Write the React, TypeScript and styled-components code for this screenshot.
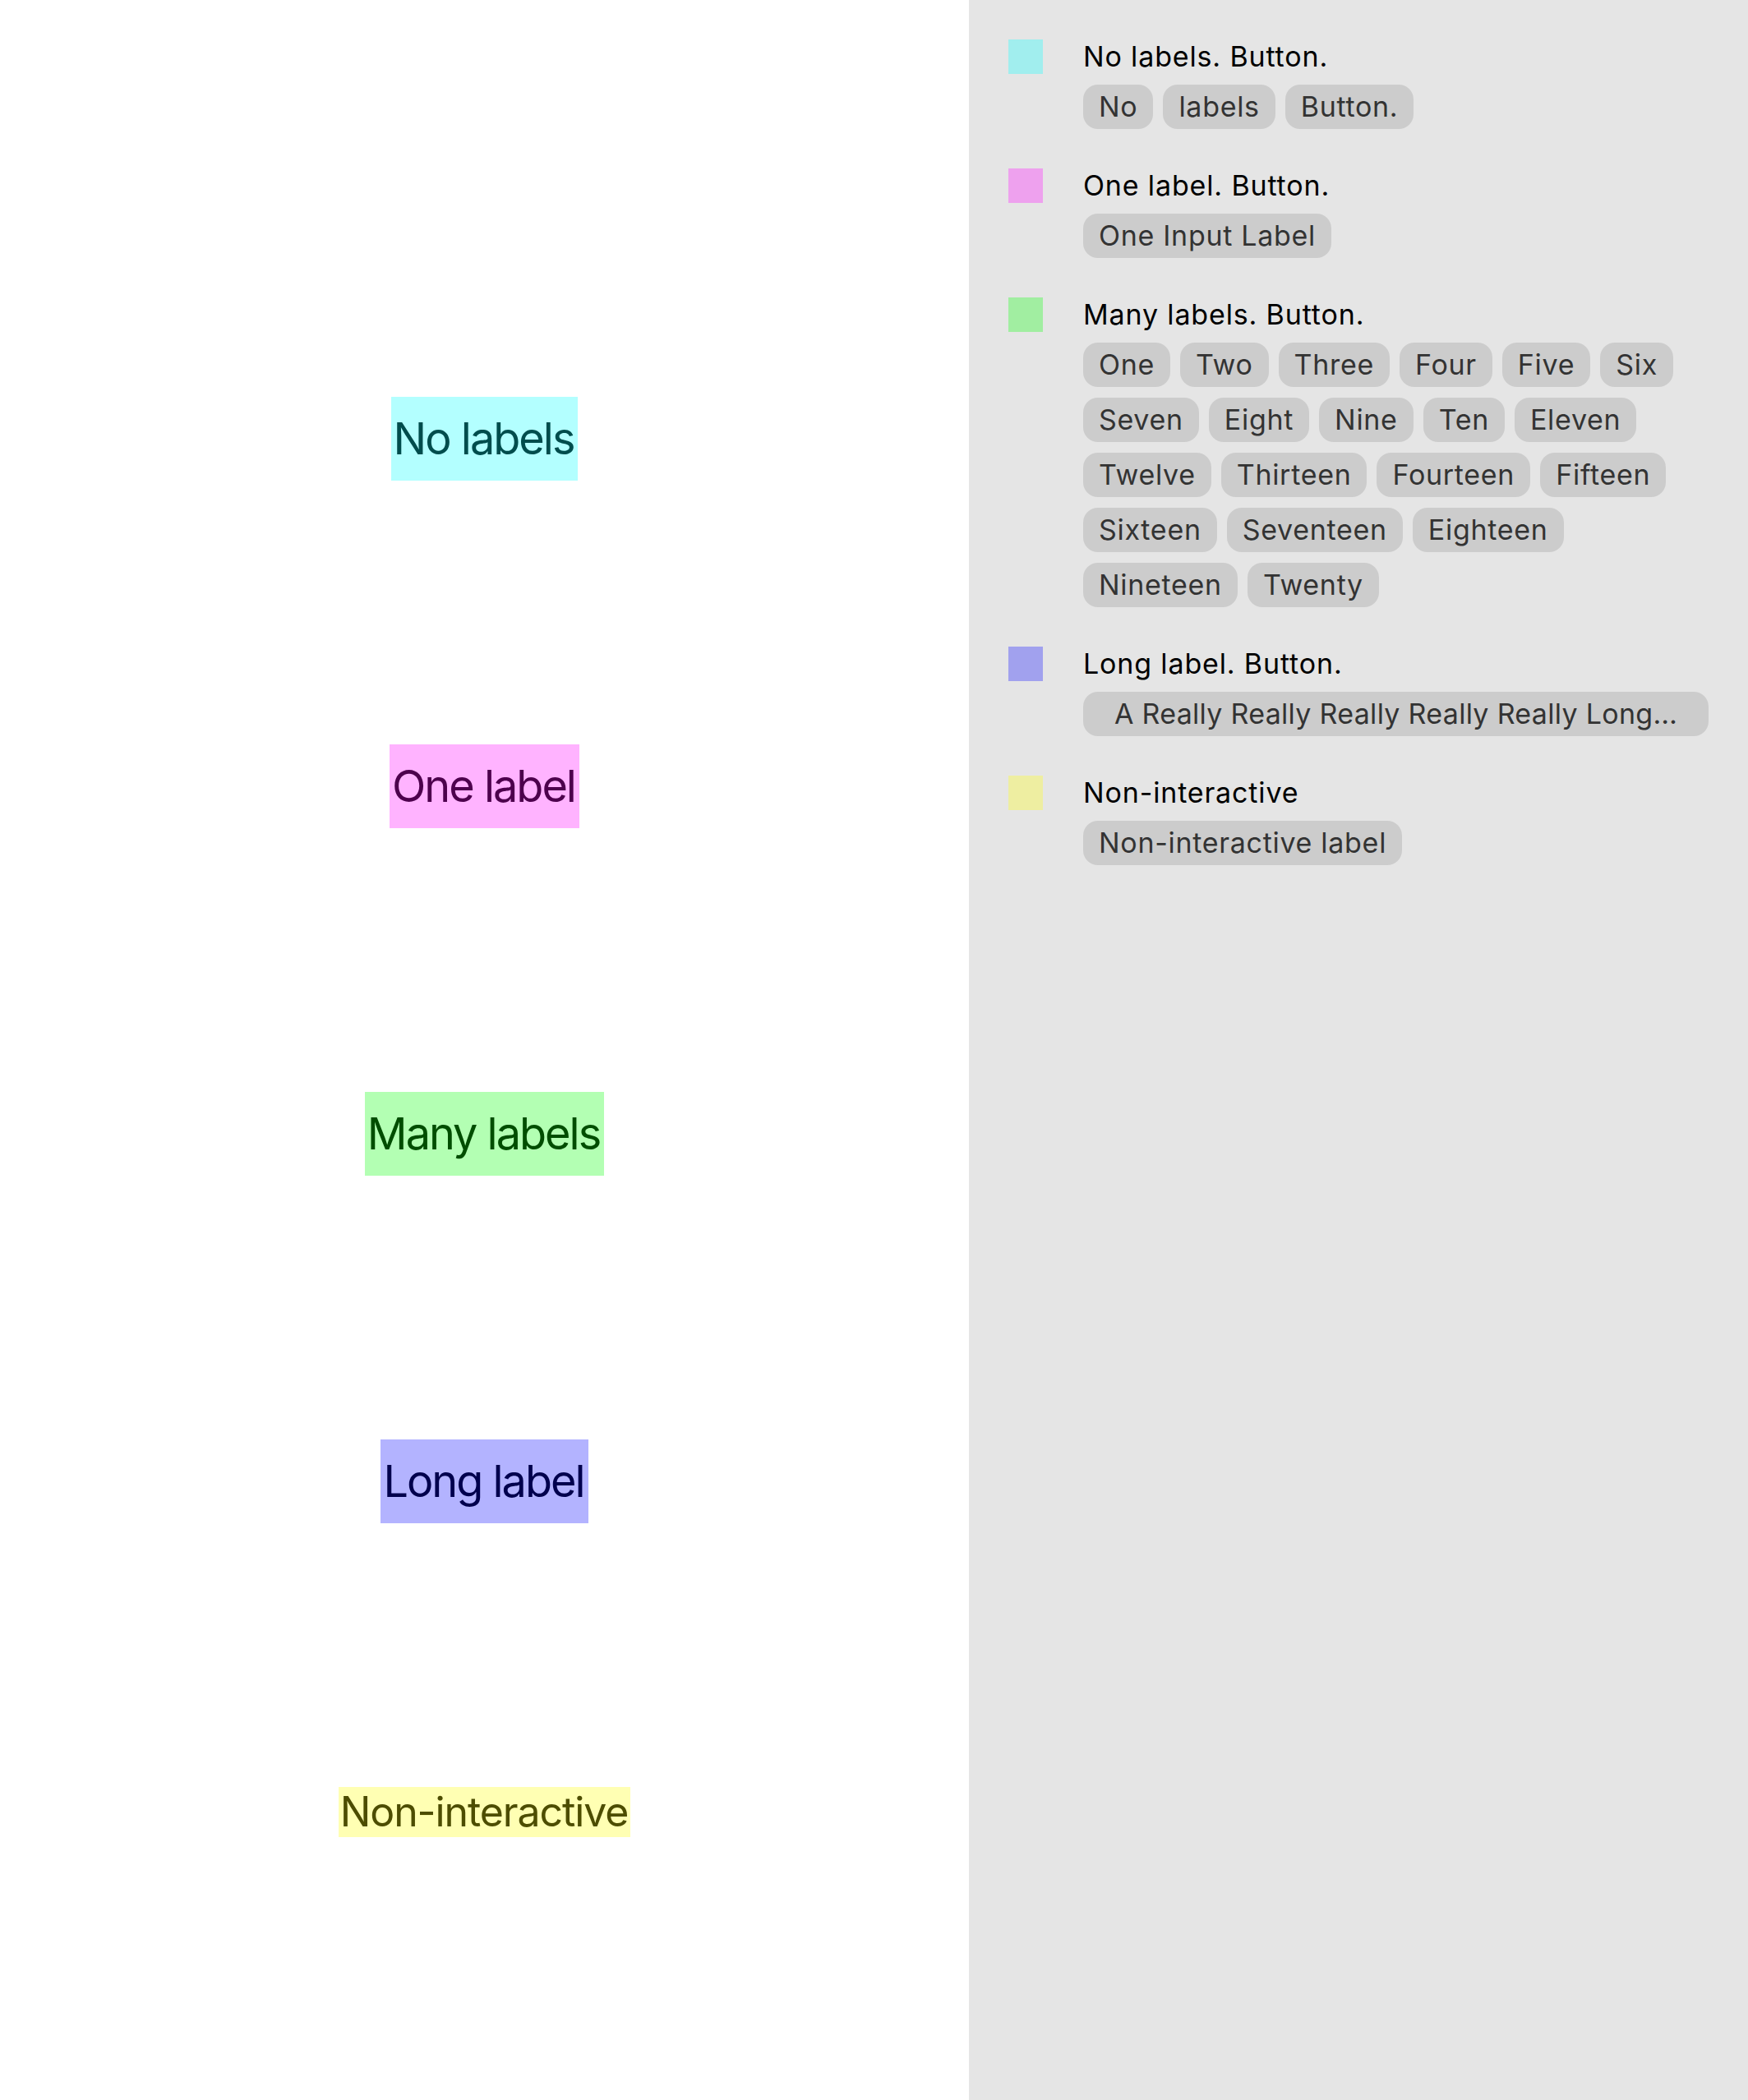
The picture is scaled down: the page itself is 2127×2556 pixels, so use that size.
import React from "react";
import styled, { createGlobalStyle } from "styled-components";

const GlobalStyle = createGlobalStyle`
  html, body {
    margin: 0;
    padding: 0;
    background: #ffffff;
  }
  body {
    font-family: Inter, "Noto Sans", "Liberation Sans", sans-serif;
    -webkit-font-smoothing: antialiased;
  }
`;

type Tone = "cyan" | "magenta" | "green" | "blue" | "yellow";

const toneBg: Record<Tone, string> = {
  cyan: "#b3ffff",
  magenta: "#ffb3ff",
  green: "#b3ffb3",
  blue: "#b3b3ff",
  yellow: "#ffffb3",
};

const toneInk: Record<Tone, string> = {
  cyan: "#004d4d",
  magenta: "#4d004d",
  green: "#004d00",
  blue: "#00004d",
  yellow: "#4d4d00",
};

const toneSwatch: Record<Tone, string> = {
  cyan: "#a1eeee",
  magenta: "#eea1ee",
  green: "#a1eea1",
  blue: "#a1a1ee",
  yellow: "#eeeea1",
};

const Page = styled.div`
  display: grid;
  grid-template-columns: 1179px 1fr;
  min-height: 2556px;
`;

const Stage = styled.main`
  display: flex;
  flex-direction: column;
  align-items: center;
  gap: 321px;
  padding-top: 483px;
  background: #ffffff;
`;

const DemoButton = styled.button<{ $tone: Tone }>`
  border: none;
  margin: 0;
  font-family: inherit;
  font-size: 54px;
  line-height: 66px;
  letter-spacing: -2px;
  padding: 18px 5px 18px 3px;
  background: ${(p) => toneBg[p.$tone]};
  color: ${(p) => toneInk[p.$tone]};
  cursor: pointer;
`;

const DemoText = styled.span<{ $tone: Tone }>`
  font-size: 50px;
  line-height: 61px;
  letter-spacing: -1.1px;
  padding: 0 3px 0 2px;
  background: ${(p) => toneBg[p.$tone]};
  color: ${(p) => toneInk[p.$tone]};
`;

const Inspector = styled.aside`
  display: flex;
  flex-direction: column;
  gap: 48px;
  padding: 48px 48px;
  background: #e5e5e5;
`;

const Entry = styled.section`
  display: grid;
  grid-template-columns: 42px 1fr;
  column-gap: 49px;
  row-gap: 13px;
`;

const Swatch = styled.div<{ $tone: Tone }>`
  width: 42px;
  height: 42px;
  background: ${(p) => toneSwatch[p.$tone]};
`;

const Title = styled.div`
  grid-column: 2;
  font-size: 34px;
  line-height: 42px;
  letter-spacing: 0.85px;
  color: #000000;
`;

const ChipList = styled.div`
  grid-column: 2;
  display: flex;
  flex-wrap: wrap;
  gap: 13px 12px;
  min-width: 0;
`;

const Chip = styled.span<{ $wide?: boolean }>`
  display: block;
  box-sizing: border-box;
  height: 54px;
  padding: 6px ${(p) => (p.$wide ? "28px" : "19px")};
  border-radius: 18px;
  background: #cccccc;
  color: #333333;
  font-size: 34px;
  line-height: 42px;
  letter-spacing: ${(p) => (p.$wide ? "0.3px" : "0.7px")};
  white-space: nowrap;
  overflow: hidden;
  text-overflow: ellipsis;
  text-align: center;
  ${(p) => (p.$wide ? "width: 100%;" : "")}
`;

type Item = {
  tone: Tone;
  demo: string;
  title: string;
  labels: string[];
  interactive: boolean;
  wide?: boolean;
};

const items: Item[] = [
  { tone: "cyan", demo: "No labels", title: "No labels. Button.", labels: ["No", "labels", "Button."], interactive: true },
  { tone: "magenta", demo: "One label", title: "One label. Button.", labels: ["One Input Label"], interactive: true },
  {
    tone: "green",
    demo: "Many labels",
    title: "Many labels. Button.",
    labels: [
      "One", "Two", "Three", "Four", "Five", "Six", "Seven", "Eight", "Nine", "Ten",
      "Eleven", "Twelve", "Thirteen", "Fourteen", "Fifteen", "Sixteen", "Seventeen",
      "Eighteen", "Nineteen", "Twenty",
    ],
    interactive: true,
  },
  {
    tone: "blue",
    demo: "Long label",
    title: "Long label. Button.",
    labels: ["A Really Really Really Really Really Long…"],
    interactive: true,
    wide: true,
  },
  { tone: "yellow", demo: "Non-interactive", title: "Non-interactive", labels: ["Non-interactive label"], interactive: false },
];

export default function App() {
  return (
    <>
      <GlobalStyle />
      <Page>
        <Stage>
          {items.map((it) =>
            it.interactive ? (
              <DemoButton key={it.demo} $tone={it.tone}>
                {it.demo}
              </DemoButton>
            ) : (
              <DemoText key={it.demo} $tone={it.tone}>
                {it.demo}
              </DemoText>
            )
          )}
        </Stage>
        <Inspector>
          {items.map((it) => (
            <Entry key={it.title}>
              <Swatch $tone={it.tone} />
              <Title>{it.title}</Title>
              <ChipList>
                {it.labels.map((l) => (
                  <Chip key={l} $wide={it.wide}>
                    {l}
                  </Chip>
                ))}
              </ChipList>
            </Entry>
          ))}
        </Inspector>
      </Page>
    </>
  );
}
